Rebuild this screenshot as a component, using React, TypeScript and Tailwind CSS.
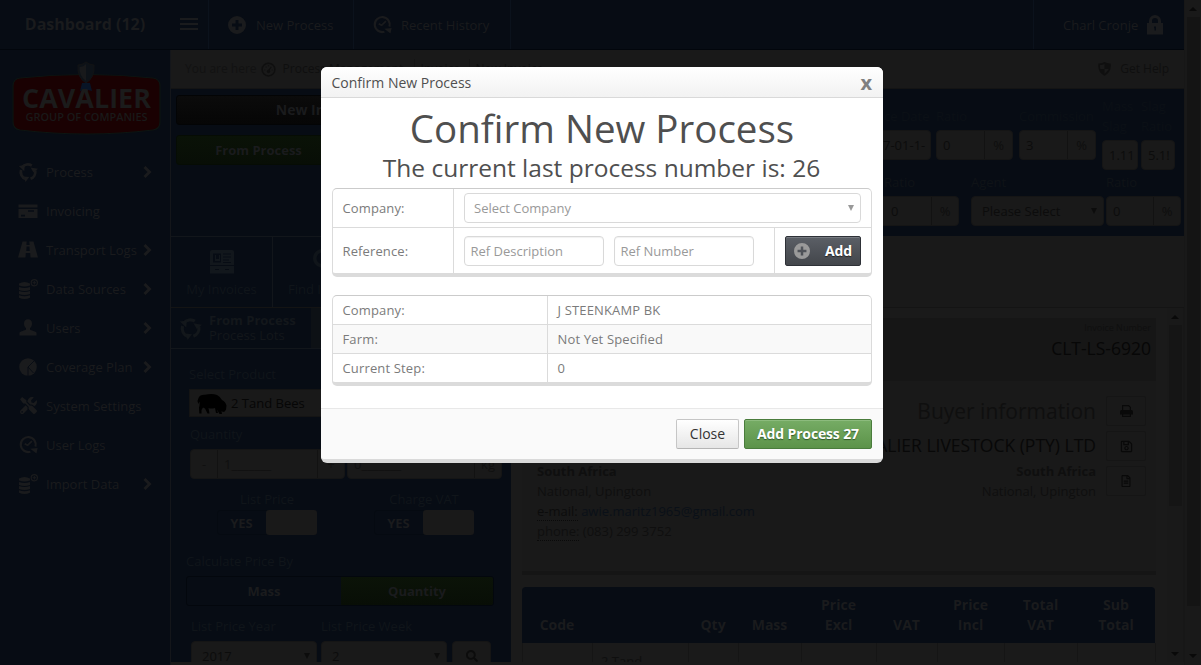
import React from "react";
import { FaRegSave, FaRegFileAlt, FaSearch, FaTools } from "react-icons/fa";

const field = "flex h-[30px] shrink-0 items-center rounded-[4px] border border-[#151515] bg-[#191919] text-[#0c0c0c] overflow-hidden whitespace-nowrap";

function CycleIcon({ className = "" }: { className?: string }) {
  return (
    <svg viewBox="0 0 20 20" className={className} fill="none" stroke="currentColor" strokeWidth="2.8">
      <path d="M4.2 5.2a7.4 7.4 0 0 1 9.6-1.600" />
      <path d="M17.200 8.500a7.400 7.400 0 0 1-4.700 8.300" />
      <path d="M7.600 17a7.400 7.400 0 0 1-4.500-9.100" />
      <path d="M.8 4l6-1-.5 6.200zM20 6.800l-4.500 3.700-3-5zM7.500 20l-1.800-5.600 5.600.600z" fill="currentColor" stroke="none" />
    </svg>
  );
}

function HistoryIcon({ className = "" }: { className?: string }) {
  return (
    <svg viewBox="0 0 20 20" className={className} fill="none" stroke="currentColor" strokeWidth="2.3">
      <path d="M12 17.600a7.900 7.900 0 1 1 5.300-5.300" />
      <path d="M6 9.200l3 1.600 4.600-4.400" strokeWidth="1.800" />
      <circle cx="9" cy="10.600" r="1" fill="currentColor" stroke="none" />
      <path d="M11.800 14.400l7.800-.600-1.200 5.800z" fill="currentColor" stroke="none" />
    </svg>
  );
}

function PlusCircle({ className = "" }: { className?: string }) {
  return (
    <svg viewBox="0 0 18 18" className={className}>
      <path fillRule="evenodd" fill="currentColor" d="M9 0a9 9 0 1 1 0 18A9 9 0 0 1 9 0zM7.6 4v3.600H4v2.800h3.600V14h2.800v-3.600H14V7.600h-3.600V4z" />
    </svg>
  );
}

function CardIcon() {
  return (
    <svg viewBox="0 0 20 16" className="h-[16px] w-[20px]" fill="currentColor">
      <path fillRule="evenodd" d="M.5 1.500h19v3H.5zM.5 6h19v9H.5zM10 7.200v1.600h6V7.200zM3 11.800v1.700h4v-1.700z" />
    </svg>
  );
}

function RoadIcon() {
  return (
    <svg viewBox="0 0 20 17" className="h-[17px] w-[20px]" fill="currentColor">
      <path d="M4.500.5h4.300L8.500 4h3L11.200.5h4.300L20 16.500h-7.500L12.200 12H7.800l-.3 4.500H0z" />
      <path d="M9 .5h2l.2 3H8.800z" className="text-[#070c14]" />
      <path d="M8.600 5.500h2.800l.3 4.500H8.300z" className="text-[#070c14]" />
    </svg>
  );
}

function UserIcon() {
  return (
    <svg viewBox="0 0 18 17" className="h-[17px] w-[18px]" fill="currentColor">
      <path d="M9 .3c2.700 0 4 1.700 4 4.200 0 2-.8 3.700-2 4.800v1.200c1 1.200 5.500 1.500 6.500 3.200V16.500H.5v-2.800C1.500 12 6 11.700 7 10.500V9.300C5.800 8.200 5 6.500 5 4.500 5 2 6.300.3 9 .3z" />
    </svg>
  );
}

function PieIcon() {
  return (
    <svg viewBox="0 0 18 18" className="h-[18px] w-[18px]">
      <circle cx="9" cy="9" r="8.800" fill="currentColor" />
      <path d="M15.500 2.500L9 9v9M9 9l5.500 6" fill="none" stroke="#070c14" strokeWidth=".9" />
    </svg>
  );
}

function PrintIcon() {
  return (
    <svg viewBox="0 0 13 12" className="h-[12px] w-[13px]" fill="none" stroke="currentColor" strokeWidth="1.200">
      <path d="M2.600 5.500V.6h6l1.800 1.800v3.100M2.600 9v2.400h7.800V9" />
      <path d="M0 6.500Q0 5 1.500 5h10Q13 5 13 6.500v3H0z" fill="currentColor" stroke="none" />
    </svg>
  );
}

function DataIcon() {
  return (
    <svg viewBox="0 0 20 20" className="h-[20px] w-[20px]" fill="currentColor">
      <path d="M1 4.500q5.500-3 11 0v2q-5.500 2.200-11 0zM1 8q5.500 2.200 11 0v3q-5.500 2-11 0zM1 12.100q5.500 2 11 0v3q-5.500 2-11 0zM1 16.200q5.500 2 11 0v2.500q-5.500 2.500-11 0z" />
      <path d="M16.300 0a3.700 3.700 0 1 1 0 7.400 3.700 3.700 0 0 1 0-7.400zm0 1.200a2.500 2.500 0 1 0 0 5 2.500 2.500 0 0 0 0-5z" fillRule="evenodd" />
      <path d="M15.800 2h1v1.200H18v1h-1.200v1.200h-1V4.200h-1.200v-1h1.200z" />
    </svg>
  );
}

function LockIcon() {
  return (
    <svg viewBox="0 0 16 20" className="h-[20px] w-[16px]" fill="currentColor">
      <path fillRule="evenodd" d="M0 8h2V6a6 6 0 0 1 12 0v2h2v11.500H0zM5 8h6V6a3 3 0 0 0-6 0zM7 11.500v1.500l.5.500v2h1.500v-4z" />
    </svg>
  );
}

function GaugeIcon() {
  return (
    <svg viewBox="0 0 16 16" className="h-[15px] w-[15px]" fill="none" stroke="currentColor">
      <circle cx="8" cy="8" r="6.800" strokeWidth="1.600" />
      <path d="M8 9.500L11 5M3.500 8.500h1M5 5l.8.8M8 3.500v1M11.500 8.500h1" strokeWidth="1.200" />
      <circle cx="8" cy="10" r="1.400" fill="currentColor" />
    </svg>
  );
}

function ShieldIcon() {
  return (
    <svg viewBox="0 0 14 15" className="h-[14px] w-[13px]" fill="currentColor">
      <path fillRule="evenodd" d="M7 0q3 2 6.500 1.500Q15 10.500 7 14.700-1 10.500.5 1.500 4 2 7 0zM7 2.200Q4.800 3.500 2.300 3.300q-.3 2.200.2 4.200H7v5q3.500-2.300 4.500-5H7z" />
    </svg>
  );
}

function Logo() {
  return (
    <svg viewBox="0 0 150 78" className="h-[78px] w-[150px]">
      <path d="M9 17Q75 10 142 17q7 1 7 8v36q0 7-7 8-66 8-133 0-7-1-7-8V25q0-7 7-8z" fill="#1a0102" stroke="#0d1512" strokeWidth="1.200" />
      <path d="M75 1q4 3 8 3 1 13-8 18-9-5-8-18 4 0 8-3z" fill="#0d1218" stroke="#141414" strokeWidth=".8" />
      <path d="M75 3v17q-7-5-6.500-14 4 0 6.500-3z" fill="#18191b" />
      <path d="M71 22h8l2 8-4-1-2 4-2-4-4 1z" fill="#081426" />
      <text x="75.500" y="46.500" textAnchor="middle" textLength="129" lengthAdjust="spacingAndGlyphs" fontFamily="Open Sans, sans-serif" fontWeight="700" fontSize="26" fill="#1b1b1b">CAVALIER</text>
      <text x="75.500" y="59.500" textAnchor="middle" textLength="122" lengthAdjust="spacingAndGlyphs" fontFamily="Open Sans, sans-serif" fontWeight="600" fontSize="10.500" fill="#191919">GROUP OF COMPANIES</text>
    </svg>
  );
}

function Bison() {
  return (
    <svg viewBox="0 0 30 20" className="h-[20px] w-[30px]" fill="#000">
      <path d="M1.500 4Q3 .5 8 .8q7-1.500 12 .2 3 1.500 5 5 3.500 1.500 4.500 5.500l-.5 4q-1 2.500-3 2.500l-1.500-1 .5 3h-2.500l-2.500-4.500L21 19h-2l-1-5q-4 1-6.500 0l1 5.500h-2L8 14.500 6 13.500 4.500 16v3.500H2.300L2 13.500q1-3 .5-6L1.300 10 .5 7z" />
    </svg>
  );
}

function Caret() {
  return <svg viewBox="0 0 6 6" className="h-[6px] w-[6px] shrink-0" fill="currentColor"><path d="M0 0h6L3 6z" /></svg>;
}

function Tri({ up }: { up?: boolean }) {
  return <svg viewBox="0 0 8 4" className="block h-[4px] w-[8px]" fill="currentColor"><path d={up ? "M0 4l4-4 4 4z" : "M0 0h8L4 4z"} /></svg>;
}

const nav: { label: string; arrow?: boolean; icon: React.ReactNode }[] = [
  { label: "Process", arrow: true, icon: <CycleIcon className="h-[20px] w-[20px]" /> },
  { label: "Invoicing", icon: <CardIcon /> },
  { label: "Transport Logs", arrow: true, icon: <RoadIcon /> },
  { label: "Data Sources", arrow: true, icon: <DataIcon /> },
  { label: "Users", arrow: true, icon: <UserIcon /> },
  { label: "Coverage Plan", arrow: true, icon: <PieIcon /> },
  { label: "System Settings", icon: <FaTools size={17} /> },
  { label: "User Logs", icon: <HistoryIcon className="h-[19px] w-[19px]" /> },
  { label: "Import Data", arrow: true, icon: <DataIcon /> },
];

function Header() {
  return (
    <header className="flex h-[50px] shrink-0 items-stretch border-b border-[#02060c] bg-[#070c14] text-[#1a1b1d]">
      <div className="w-[170px] pt-[12px] text-center text-[16px] font-bold leading-6">Dashboard (12)</div>
      <div className="flex w-[39px] items-center border-r border-[#0b121c] pb-[2px] pl-[10px]">
        <div className="flex flex-col gap-[3px]">
          <i className="block h-[2px] w-[18px] bg-current" />
          <i className="block h-[2px] w-[18px] bg-current" />
          <i className="block h-[2px] w-[18px] bg-current" />
        </div>
      </div>
      <div className="flex w-[145px] items-center gap-[10px] border-r border-[#0b121c] pl-[19px]">
        <PlusCircle className="h-[18px] w-[18px]" />
        <span>New Process</span>
      </div>
      <div className="flex w-[157px] items-center gap-[9px] border-r border-[#0b121c] pl-[19px]">
        <HistoryIcon className="h-[19px] w-[19px]" />
        <span>Recent History</span>
      </div>
      <div className="ml-auto flex w-[151px] items-center gap-[9px] border-l border-[#0b121c] pl-[29px]">
        <span>Charl Cronje</span>
        <LockIcon />
      </div>
    </header>
  );
}

function Sidebar() {
  return (
    <aside className="w-[171px] shrink-0 border-r border-[#14161a] bg-[#070c14] text-[#1a1b1d]">
      <div className="flex h-[102px] justify-center pl-px pt-[11px]">
        <Logo />
      </div>
      <nav>
        {nav.map((n) => (
          <div key={n.label} className="flex h-[39px] items-center pl-[18px] pr-[18px]">
            <span className="flex w-[20px] justify-center">{n.icon}</span>
            <span className="ml-[8px] whitespace-nowrap">{n.label}</span>
            {n.arrow && (
              <svg viewBox="0 0 9 12" className="ml-auto h-[12px] w-[9px]" fill="none" stroke="currentColor" strokeWidth="3">
                <path d="M1.500 1l5 5-5 5" />
              </svg>
            )}
          </div>
        ))}
      </nav>
    </aside>
  );
}

function Crumbs() {
  return (
    <div className="flex h-[39px] shrink-0 items-center border-b border-[#141414] bg-[#191919] pl-[14px] pr-[15px] text-[12px] text-[#0f0f0f]">
      <span className="text-[#121212]">You are here</span>
      <span className="ml-[4px]"><GaugeIcon /></span>
      <span className="ml-[7px] w-[132px] whitespace-nowrap border-r border-[#151515]">Process Management</span>
      <span className="w-[55px] border-r border-[#151515] pl-[6px]">Invoice</span>
      <span className="pl-[6px]">New Invoice</span>
      <span className="ml-auto flex items-center gap-[9px]"><ShieldIcon />Get Help</span>
    </div>
  );
}

function Percent({ value, className, split }: { value: string; className: string; split: string }) {
  return (
    <div className={`${field} ${className}`}>
      <span className="flex-1 pl-[6px]">{value}</span>
      <span className={`flex h-full items-center justify-center border-l border-[#121212] text-[#0e0e0e] ${split}`}>%</span>
    </div>
  );
}

function TopPanel() {
  return (
    <section className="flex h-[147px] shrink-0 justify-between bg-[#070c14]">
      <div className="w-[290px] pl-[5px] pt-[6px] font-bold text-[#1a1b1d]">
        <div className="flex h-[30px] items-center justify-center rounded-[3px] border border-[#030405] bg-gradient-to-b from-[#0b0b0b] to-[#060606] text-[14px]">New Invoice</div>
        <div className="mt-[10px] flex h-[30px] w-[165px] items-center justify-center rounded-[3px] border border-[#060c04] bg-gradient-to-b from-[#0a1207] to-[#080e06]">From Process</div>
      </div>
      <div className="w-[314px] text-[#0b1016]">
        <div className="flex h-[83px]">
          <div className="w-[66px] pt-[17px]">
            <div className="h-[24px] pl-[14px]">ce Date</div>
            <div className={`${field} w-[61px] pl-[12px]`}>7-01-1-</div>
          </div>
          <div className="w-[83px] pt-[17px]">
            <div className="h-[24px]">Ratio</div>
            <Percent value="0" className="w-[77px]" split="w-[28px]" />
          </div>
          <div className="w-[83px] pt-[17px]">
            <div className="h-[24px]">Commission</div>
            <Percent value="3" className="w-[77px]" split="w-[28px]" />
          </div>
          <div className="flex gap-[3px] pt-[7px]">
            <div>
              <div className="h-[44px] leading-5">Mass<br />Slag</div>
              <div className={`${field} w-[36px] pl-[6px]`}>1.11</div>
            </div>
            <div>
              <div className="h-[44px] leading-5">Slag<br />Ratio</div>
              <div className={`${field} w-[34px] pl-[6px]`}>5.1!</div>
            </div>
          </div>
        </div>
        <div className="flex text-[#0f1317]">
          <div className="w-[101px]">
            <div className="h-[24px] pl-[14px]">Ratio</div>
            <Percent value="0" className="w-[89px] pl-[14px]" split="w-[27px]" />
          </div>
          <div className="w-[135px]">
            <div className="h-[24px]">Agent</div>
            <div className={`${field} w-[133px] justify-between pl-[10px] pr-[6px]`}>Please Select<Caret /></div>
          </div>
          <div>
            <div className="h-[24px]">Ratio</div>
            <Percent value="0" className="w-[75px]" split="w-[27px]" />
          </div>
        </div>
      </div>
    </section>
  );
}

function Toolbar() {
  return (
    <div className="flex h-[72px] shrink-0 border-b border-[#141414] bg-[#191919] text-[#10151a]">
      <div className="flex w-[400px] border-t border-[#12161b] bg-[#070c14]">
        <div className="flex w-[102px] flex-col items-center border-r border-[#12161b] pt-[13px]">
          <svg viewBox="0 0 24 24" className="h-[24px] w-[24px] text-[#12171c]" fill="currentColor">
            <path fillRule="evenodd" d="M2 0h20q2 0 2 2v13H0V2q0-2 2-2zM3 3.500v9h8v-9zM13 3.500v1h8v-1zm0 3v1h8v-1zm0 3v1h6v-1zm0 2.500v1h8v-1zM0 16h24v7.500H0zM5 19v1h4v-1zm10 0v1h4v-1z" />
            <path d="M5 5h1v4h3V5h1v6H5z" />
          </svg>
          <span className="mt-[5px]">My Invoices</span>
        </div>
        <div className="flex w-[102px] flex-col items-center pt-[12px]">
          <FaSearch size={23} />
          <span className="mt-[7px]">Find Invoice</span>
        </div>
      </div>
    </div>
  );
}

function Stepper({ left, right, value }: { left?: string; right: string; value: string }) {
  return (
    <div className={`${field} w-[155px] text-[#101010]`}>
      {left && <span className="flex h-full w-[27px] items-center justify-center border-r border-[#121212]">{left}</span>}
      <span className="flex-1 pl-[6px]">{value}</span>
      <span className="flex h-full w-[27px] items-center justify-center border-l border-[#121212]">{right}</span>
    </div>
  );
}

function Toggle({ label }: { label: string }) {
  return (
    <div className="flex w-[100px] flex-col items-center">
      <span className="h-[21px]">{label}</span>
      <div className="flex h-[25px] w-[100px] rounded-[3px] border border-[#050a11]">
        <b className="flex flex-1 items-center justify-center pr-px text-[#1a1b1d]">YES</b>
        <i className="-my-px -mr-px block w-[51px] rounded-[3px] bg-[#191919]" />
      </div>
    </div>
  );
}

function FormPanel() {
  return (
    <section className="w-[340px] shrink-0 overflow-hidden bg-[#070c14] text-[#10151a]">
      <div className="flex h-[41px] border-b border-[#12161b] bg-[#0d1115]">
        <div className="flex w-[140px] items-center bg-[#070c14] pl-[8px] text-[#13171b]">
          <CycleIcon className="h-[23px] w-[23px]" />
          <div className="ml-[7px] whitespace-nowrap leading-[15px]"><b>From Process</b><br />Process Lots</div>
        </div>
      </div>
      <div className="px-[18px] pt-[15px]">
        <div className="h-[25px]">Select Product</div>
        <div className="flex h-[28px] items-center gap-[4px] border border-[#141414] bg-[#191919] pl-[7px] pt-[2px] text-[#060606]"><Bison /><span className="-mt-[2px]">2 Tand Bees</span></div>
        <div className="mt-[7px] h-[25px] pl-px">Quantity</div>
        <div className="flex gap-[2px] pl-px">
          <Stepper left="-" right="+" value="1_______" />
          <Stepper right="kg" value="0_______" />
        </div>
        <div className="mt-[10px] flex gap-[57px] pl-[28px]">
          <Toggle label="List Price" />
          <Toggle label="Charge VAT" />
        </div>
      </div>
      <div className="pl-[15px] pt-[16px]">
        <div className="h-[25px]">Calculate Price By</div>
        <div className="flex h-[30px] w-[308px] overflow-hidden rounded-[3px] border border-[#03070d] font-bold text-[#1a1b1d]">
          <span className="flex flex-1 items-center justify-center">Mass</span>
          <span className="flex w-[152px] items-center justify-center bg-gradient-to-b from-[#0b1308] to-[#080e06]">Quantity</span>
        </div>
        <div className="mt-[10px] flex pl-[5px]"><span className="w-[130px]">List Price Year</span><span>List Price Week</span></div>
        <div className="mt-[5px] flex gap-[4px] pl-[5px]">
          <div className={`${field} w-[126px] justify-between px-[10px] pr-[6px]`}>2017<Caret /></div>
          <div className={`${field} w-[126px] justify-between px-[10px] pr-[6px]`}>2<Caret /></div>
          <div className={`${field} ml-px w-[39px] justify-center`}><FaSearch size={12} /></div>
        </div>
      </div>
    </section>
  );
}

const cols = [
  ["w-[70px]", "Code"], ["w-[96px]", ""], ["w-[50px]", "Qty"], ["w-[63px]", "Mass"], ["w-[75px]", "Price Excl"],
  ["w-[61px]", "VAT"], ["w-[67px]", "Price Incl"], ["w-[73px]", "Total VAT"], ["w-[78px]", "Sub Total"],
];

function InvoicePanel() {
  return (
    <section className="flex min-w-0 flex-1 justify-between overflow-hidden bg-[#1a1a1a] pl-[11px] text-[#0f0f0f]">
      <div className="w-[633px] pt-[10px]">
        <div className="-mr-px h-[257px] border-b-4 border-[#151515] bg-[#191919]">
          <div className="flex h-[63px] flex-col items-end bg-[#161616] pr-[5px]">
            <span className="text-[9px] leading-[19px]">Invoice Number</span>
            <span className="-mt-px text-[17.500px] leading-[24px] text-[#070707]">CLT-LS-6920</span>
          </div>
          <div className="flex items-start justify-between pl-[15px] pr-[10px] pt-[15px]">
            <div className="pt-[65px]">
              <b>South Africa</b><br />National, Upington<br />
              <span className="border-b border-dotted border-[#0a0a0a] text-[#0c0c0c]">e-mail:</span> <span className="text-[#0a1018]">awie.maritz1965@gmail.com</span><br />
              <span className="border-b border-dotted border-[#0a0a0a]">phone:</span> (083) 299 3752
            </div>
            <div className="flex gap-[10px] text-right">
              <div className="whitespace-nowrap">
                <div className="text-[21px] leading-[30px]">Buyer information</div>
                <div className="mt-[2px] h-[33px] text-[17.500px] leading-[35px] text-[#080808]">CAVALIER LIVESTOCK (PTY) LTD</div>
                <b>South Africa</b><br />National, Upington
              </div>
              <div className="flex flex-col gap-[5px] text-[#090909]">
                {[<PrintIcon key="p" />, <FaRegSave key="s" size={13} />, <FaRegFileAlt key="f" size={12} />].map((icon, i) => (
                  <span key={i} className="flex h-[30px] w-[40px] items-center justify-center rounded-[2px] border border-[#151515]">{icon}</span>
                ))}
              </div>
            </div>
          </div>
        </div>
        <div className="mt-[12px] flex h-[56px] items-end rounded-t-[4px] bg-[#070c14] pb-[8px] text-center text-[14px] font-bold leading-5 text-[#1a1b1d]">
          {cols.map(([w, t], i) => <div key={i} className={`${w} shrink-0 ${t.includes(" ") ? "px-[12px]" : "whitespace-nowrap"}`}>{t}</div>)}
        </div>
        <div className="flex h-[40px] border-l border-[#151515] leading-5">
          {cols.map(([w], i) => <div key={i} className={`${w} shrink-0 border-r border-[#151515] pl-[8px] pt-[8px]`}>{i === 1 ? "2 Tand" : ""}</div>)}
        </div>
      </div>
      <div className="flex w-[17px] flex-col items-center border-r border-[#171717] bg-[#191919] pt-[7px] text-[#090909]">
        <Tri up />
        <i className="mt-[6px] block h-[181px] w-[13px] bg-[#151515]" />
        <span className="mt-[146px]"><Tri /></span>
      </div>
    </section>
  );
}

const details = [["Company:", "J STEENKAMP BK"], ["Farm:", "Not Yet Specified"], ["Current Step:", "0"]];
const input = "flex h-[30px] items-center rounded-[4px] border border-[#d9d9d9] bg-white text-[#999]";

function Modal() {
  return (
    <div role="dialog" className="absolute left-[321px] top-[67px] flex h-[396px] w-[562px] flex-col overflow-hidden rounded-[6px] border-b-4 border-[#dadada] bg-white text-[#7b7b7b]">
      <div className="flex h-[31px] shrink-0 items-center justify-between border-b border-[#d9d9d9] bg-gradient-to-b from-white to-[#f2f2f2] pl-[10.500px] pr-[11px] text-[14px] text-[#4f4f4f]">
        <span className="pt-[2px]">Confirm New Process</span>
        <span className="pt-px text-[20px] font-bold leading-none text-[#808080]">x</span>
      </div>
      <div className="h-[310px] px-[11px] pt-[10px]">
        <h1 className="whitespace-nowrap text-center text-[38.500px] leading-[40px] text-[#4f4f4f]">Confirm New Process</h1>
        <h3 className="-ml-px whitespace-nowrap text-center text-[24.500px] leading-[40px] text-[#4f4f4f]">The current last process number is: 26</h3>
        <div className="h-[89px] rounded-[5px] border border-b-4 border-[#dbdbdb] border-t-[#cbcbcb]">
          <div className="flex h-[39px] border-b border-[#dbdbdb]">
            <div className="flex w-[121px] items-center border-r border-[#dbdbdb] pl-[9.500px] tracking-[0.12px]">Company:</div>
            <div className="flex flex-1 items-center px-[10px]">
              <div className={`${input} w-full justify-between pl-[9px] pr-[6px]`}>Select Company<Caret /></div>
            </div>
          </div>
          <div className="flex h-[46px]">
            <div className="flex w-[121px] items-center border-r border-[#dbdbdb] pl-[9.500px] tracking-[0.12px]">Reference:</div>
            <div className="flex flex-1 items-center gap-[10px] pl-[10px]">
              <div className={`${input} w-[140px] pl-[5.500px] shadow-[inset_0_1px_1px_rgba(0,0,0,0.06)]`}>Ref Description</div>
              <div className={`${input} w-[140px] pl-[5.500px] shadow-[inset_0_1px_1px_rgba(0,0,0,0.06)]`}>Ref Number</div>
            </div>
            <div className="flex w-[97px] items-center border-l border-[#dbdbdb] pl-[10px]">
              <button className="flex h-[30px] w-[76px] items-center justify-between rounded-[2px] border border-[#2e3137] bg-gradient-to-b from-[#5b5f66] to-[#43464b] pl-[8px] pr-[8px] text-[14px] font-bold tracking-[-0.15px] text-white shadow-[inset_0_1px_0_#767a80] [text-shadow:0_1px_1px_#222]">
                <PlusCircle className="h-[16px] w-[16px] text-[#9a9a9a]" />Add
              </button>
            </div>
          </div>
        </div>
        <div className="mt-[18px] overflow-hidden rounded-[5px] border border-b-4 border-[#dbdbdb] border-t-[#cbcbcb] tracking-[0.15px]">
          {details.map(([k, v]) => (
            <div key={k} className="flex h-[29px] border-b border-[#dbdbdb] last:h-[28px] last:border-b-0 even:bg-[#f9f9f9]">
              <div className="flex w-[215px] items-center border-r border-[#dbdbdb] pl-[9.500px]">{k}</div>
              <div className="flex items-center pl-[9.500px]">{v}</div>
            </div>
          ))}
        </div>
      </div>
      <div className="flex flex-1 justify-end gap-[5px] border-t border-[#e8e8e8] bg-[#fafafa] pr-[11px] pt-[10px] text-[14px]">
        <button className="h-[30px] w-[63px] rounded-[2px] border border-[#c6c6c6] border-b-[#b5b5b5] bg-gradient-to-b from-white to-[#e6e6e6] text-[#333]">Close</button>
        <button className="h-[30px] w-[128px] rounded-[2px] border border-[#4a7c3c] bg-gradient-to-b from-[#76ac65] to-[#5c9349] font-bold tracking-[-0.15px] text-white shadow-[inset_0_1px_0_#8cbb7d] [text-shadow:0_1px_1px_#33582a]">Add Process 27</button>
      </div>
    </div>
  );
}

export default function App() {
  return (
    <div className="relative flex h-[665px] w-[1201px] overflow-hidden bg-[#1a1a1a] text-[13px] leading-5 [font-family:'Open_Sans',sans-serif]">
      <div className="flex w-[1184px] shrink-0 flex-col">
        <Header />
        <div className="flex min-h-0 flex-1">
          <Sidebar />
          <main className="flex min-w-0 flex-1 flex-col">
            <Crumbs />
            <TopPanel />
            <Toolbar />
            <div className="flex h-[354px] shrink-0 overflow-hidden">
              <FormPanel />
              <InvoicePanel />
            </div>
          </main>
        </div>
      </div>
      <div className="flex w-[17px] flex-col items-center border-l border-[#171717] bg-[#191919] pt-[7px] text-[#090909]">
        <Tri up />
        <i className="mt-[6px] block h-[589px] w-[13px] bg-[#141414]" />
        <span className="mt-[48px]"><Tri /></span>
      </div>
      <Modal />
    </div>
  );
}
